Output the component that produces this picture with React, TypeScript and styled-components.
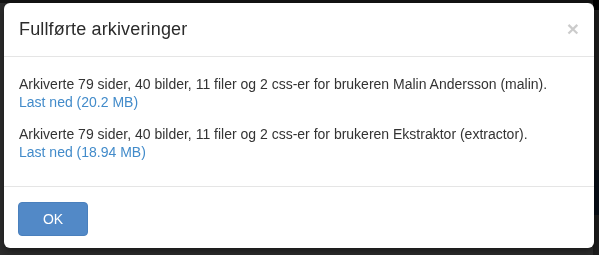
import React from 'react';
import styled, { createGlobalStyle } from 'styled-components';

const GlobalStyle = createGlobalStyle`
  html, body {
    margin: 0;
    padding: 0;
    height: 100%;
    background: #2a2a2a;
    font-family: "Liberation Sans", Arial, Helvetica, sans-serif;
    color: #333;
  }
  #root {
    height: 100%;
  }
`;

const Page = styled.div`
  display: flex;
  height: 100%;
  background: #f4f4f4;
`;

const PageMain = styled.div`
  flex: 1;
  background: linear-gradient(#6a6a6a 0 3px, #f4f4f4 3px);
`;

const PageSide = styled.div`
  width: 6px;
  background: linear-gradient(#000 0 10px, #9a9a9a 10px 170px, #274a78 170px 215px, #9a9a9a 215px);
`;

const Backdrop = styled.div`
  position: fixed;
  inset: 0;
  background: rgba(0, 0, 0, 0.82);
`;

const Modal = styled.div`
  position: fixed;
  top: 3px;
  left: 4px;
  width: 590px;
  background: #fff;
  border-radius: 6px;
  box-shadow: 0 3px 9px rgba(0, 0, 0, 0.5);
  overflow: hidden;
`;

const Header = styled.div`
  display: flex;
  align-items: center;
  justify-content: space-between;
  padding: 15px;
  border-bottom: 1px solid #e5e5e5;
`;

const Title = styled.h4`
  margin: 0;
  font-size: 18px;
  line-height: 23px;
  font-weight: 400;
  letter-spacing: 0.15px;
  color: #2b2b2b;
`;

const Close = styled.button`
  border: 0;
  background: none;
  padding: 0;
  margin-top: -2px;
  font-family: "Liberation Sans", Arial, sans-serif;
  font-size: 21px;
  line-height: 1;
  font-weight: 700;
  color: #000;
  opacity: 0.2;
  cursor: pointer;
`;

const Body = styled.div`
  padding: 18px 15px 11px;
`;

const Paragraph = styled.p`
  margin: 0 0 14px;
  font-size: 14px;
  line-height: 18px;
`;

const DownloadLink = styled.a`
  color: #428bca;
  text-decoration: none;
`;

const Footer = styled.div`
  display: flex;
  padding: 15px 15px 12px 14px;
  border-top: 1px solid #e5e5e5;
`;

const Button = styled.button`
  width: 70px;
  height: 34px;
  border: 1px solid #4a80bd;
  border-radius: 4px;
  background: #5289c7;
  color: #fff;
  font-family: "Liberation Sans", Arial, sans-serif;
  font-size: 14px;
  cursor: pointer;
`;

const archives = [
  { user: 'Malin Andersson (malin)', size: '20.2 MB' },
  { user: 'Ekstraktor (extractor)', size: '18.94 MB' },
];

export default function App() {
  return (
    <>
      <GlobalStyle />
      <Page>
        <PageMain />
        <PageSide />
      </Page>
      <Backdrop />
      <Modal role="dialog">
        <Header>
          <Title>Fullførte arkiveringer</Title>
          <Close aria-label="Lukk">×</Close>
        </Header>
        <Body>
          {archives.map((a) => (
            <Paragraph key={a.user}>
              Arkiverte 79 sider, 40 bilder, 11 filer og 2 css-er for brukeren {a.user}.
              <br />
              <DownloadLink href="#">Last ned ({a.size})</DownloadLink>
            </Paragraph>
          ))}
        </Body>
        <Footer>
          <Button>OK</Button>
        </Footer>
      </Modal>
    </>
  );
}
